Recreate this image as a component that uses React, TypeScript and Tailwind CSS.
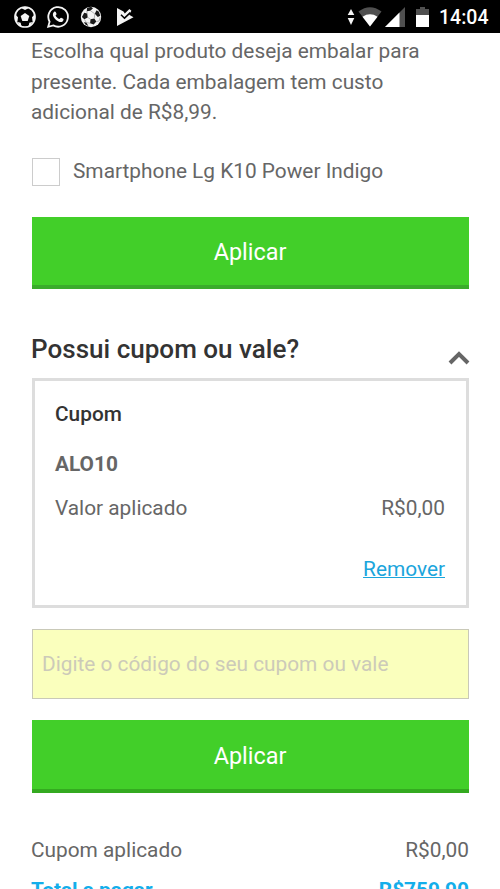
import React from "react";

function Ball({ solid }: { solid?: boolean }) {
  return (
    <svg width="24" height="24" viewBox="0 0 24 24" className="block">
      {solid ? (
        <>
          <circle cx="12" cy="12" r="10.2" fill="#f4f4f4" />
          <path d="M8 3l4-1.2 2 1.4-2.6 2.5-3.6.5zM17.5 5.2l2.4 1.6 1.3 4-2.4 1.2-3-3.2zM5.2 7.8l3 .8.5 3.8-3.4 1.9-2.4-2.3zM11.5 14.2l3.8-.8 2 3.2-2.6 3-3.6-1.4zM4.8 17.2l2.6.4 2 3.3-2.7-1.2z" fill="#1a1a1a" />
          <path d="M11.4 5.7l4.4 3.1-.5 4.6M8.2 8.6l-.4-2.4M8.7 12.4l2.8 1.8M5.3 14.3l2.1 3.3 3.7.6M17.3 16.6l2.8-.6 1-3.8" fill="none" stroke="#999" strokeWidth=".7" />
        </>
      ) : (
        <>
          <circle cx="12" cy="12" r="10" fill="#000" stroke="#f4f4f4" strokeWidth="1.7" />
          <path d="M12 8l4.3 3.1-1.6 5H9.3l-1.6-5z" fill="#f4f4f4" />
          <path d="M7.5 2.8L12 5l4.5-2.2-4.5-1zM22 9l-3 3.2.6 4.5 1.7-.5zM2 9l3 3.2-.6 4.5-1.7-.5zM8.4 21.5l-2.5-2-1.2-2.5 3 .7zM15.6 21.5l2.5-2 1.2-2.5-3 .7z" fill="#f4f4f4" />
        </>
      )}
    </svg>
  );
}

function StatusBar() {
  return (
    <header className="flex h-[33px] items-center bg-black pl-[13px] pr-[11px] text-white">
      <Ball />
      <svg width="24" height="24" viewBox="0 0 24 24" className="ml-[9px] block">
        <path d="M2.2 21.8l1.4-5.1A9.8 9.8 0 1 1 7.3 20.4z" fill="none" stroke="#f4f4f4" strokeWidth="1.8" />
        <path d="M8.2 6.7c.5-.5 1.2-.4 1.5.2l.8 1.8c.2.5-.5 1.3-.9 1.7.8 1.6 2 2.8 3.9 3.6.5-.5 1.1-1.5 1.7-1.2l2 1c.7.3.2 2-.6 2.6-1.6 1.3-4.5.1-6.5-1.5-2-1.7-3.5-4-3.2-5.8.1-1 .6-1.8 1.3-2.4z" fill="#f4f4f4" />
      </svg>
      <div className="ml-[9px]"><Ball solid /></div>
      <svg width="18" height="18" viewBox="0 0 18 18" className="ml-[13px] block">
        <path d="M1 0l6.5 3.6 1.3 1.9L13.4 1l2 1.8-2.3 4L17.5 9.2 1 18z" fill="#f4f4f4" />
        <path d="M5 6.8l3.5 3.4 5.8-5.6" fill="none" stroke="#000" strokeWidth="1.6" />
      </svg>
      <svg width="8" height="18" viewBox="0 0 8 18" className="ml-auto mr-[3px] block">
        <path d="M4 1l3.3 6H.7zM4 17L.7 10h6.6z" fill="#f4f4f4" />
      </svg>
      <svg width="24" height="20" viewBox="0 0 24 20" className="block">
        <path d="M.5 4.5Q12-4 23.5 4.5L12 19.5z" fill="#505050" />
        <path d="M4.5 9.7Q12 5 19.5 9.7L12 19.5z" fill="#fff" />
      </svg>
      <svg width="20" height="20" viewBox="0 0 20 20" className="ml-[3px] block">
        <path d="M20 0v20H0z" fill="#505050" />
        <path d="M14.5 5.5V20H0z" fill="#fff" />
      </svg>
      <svg width="13" height="20" viewBox="0 0 13 20" className="ml-[11px] block">
        <path d="M4 0h5v2h4v18H0V2h4z" fill="#505050" />
        <path d="M0 8h13v12H0z" fill="#fff" />
      </svg>
      <span className="ml-[10px] w-[50px] whitespace-nowrap pt-px text-[19.5px] font-medium leading-[33px]">14:04</span>
    </header>
  );
}

function ApplyButton({ className }: { className: string }) {
  return (
    <button className={`block w-full border-b-4 bg-[#42cf29] pr-px text-center text-[23.4px] text-white ${className}`}>
      Aplicar
    </button>
  );
}

export default function App() {
  return (
    <div className="h-[889px] w-[500px] overflow-hidden bg-white font-[Roboto,sans-serif] text-[20.83px] text-[#666]">
      <StatusBar />
      <main className="pl-8 pr-[31px]">
        <p className="-ml-px whitespace-nowrap pt-[3px] leading-[30.5px]">
          Escolha qual produto deseja embalar para<br />
          presente. Cada embalagem tem custo<br />
          adicional de R$8,99.
        </p>
        <label className="mt-[30.5px] flex h-7 items-center">
          <input type="checkbox" className="size-7 appearance-none border-[1.5px] border-[#ccc] bg-white" />
          <span className="ml-[13px] whitespace-nowrap">Smartphone Lg K10 Power Indigo</span>
        </label>
        <ApplyButton className="mt-[31px] h-[72px] border-[#3aac2b] pt-[3px]" />
        <div className="mt-[41px] flex h-12 justify-between">
          <h2 className="-ml-px whitespace-nowrap text-[26.05px] font-medium leading-[38px] text-[#333]">Possui cupom ou vale?</h2>
          <svg width="22" height="16" viewBox="0 0 22 16" className="-mr-px mt-5 block">
            <path d="M2 13l9-9 9 9" fill="none" stroke="#666" strokeWidth="4" />
          </svg>
        </div>
        <section className="h-[230px] border-[3px] border-[#ddd] pl-5 pr-[21px] pt-[18px]">
          <h3 className="font-medium leading-[30px] text-[#333]">Cupom</h3>
          <p className="mt-5 font-bold leading-[30px]">ALO10</p>
          <div className="mt-[14px] flex justify-between leading-[30px]">
            <span>Valor aplicado</span>
            <span>R$0,00</span>
          </div>
          <div className="mt-[31px] text-right leading-[30px]">
            <a className="text-[#1ba5dc] underline decoration-1">Remover</a>
          </div>
        </section>
        <input
          placeholder="Digite o código do seu cupom ou vale"
          className="mt-[21px] block h-[70px] w-full border border-[#c9c9b8] bg-[#faffbd] px-[9px] placeholder:text-[#cccab9]"
        />
        <ApplyButton className="mt-[21px] h-[73px] border-[#34aa20] pt-[5px]" />
        <div className="-ml-px mt-[42px] flex justify-between leading-[30px]">
          <span>Cupom aplicado</span>
          <span>R$0,00</span>
        </div>
        <div className="-ml-px mt-[10px] flex justify-between font-bold leading-[30px] text-[#14aeea]">
          <span>Total a pagar</span>
          <span>R$759,90</span>
        </div>
      </main>
    </div>
  );
}
